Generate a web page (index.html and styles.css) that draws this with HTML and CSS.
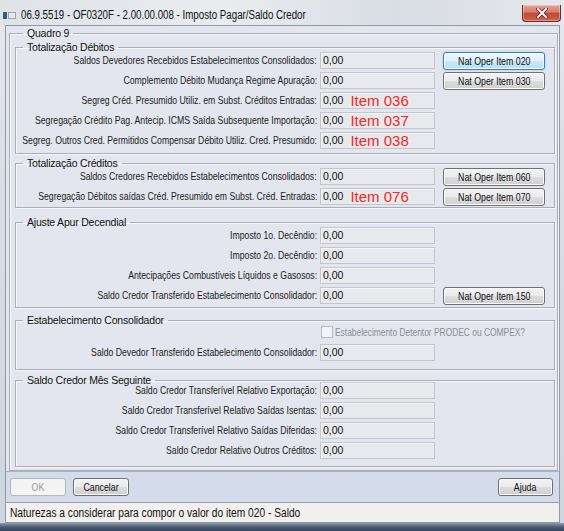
FILE: index.html
```html
<!DOCTYPE html>
<html lang="pt-BR">
<head>
    <meta charset="UTF-8">
    <title>Imposto Pagar/Saldo Credor</title>
    <link rel="stylesheet" href="styles.css">
</head>
<body>
    <div class="window">
        <div class="titlebar">
            <svg class="app-icon" width="13" height="7" viewBox="0 0 13 7">
                <rect x="0" y="0" width="4" height="7" fill="#2f5f7a"/>
                <rect x="5.5" y="0.5" width="7" height="6" fill="#e4e8ec" stroke="#9aa3ad"/>
            </svg>
            <span class="title"><span class="narrow">06.9.5519 - OF0320F - 2.00.00.008 - Imposto Pagar/Saldo Credor</span></span>
            <button class="close-btn">
                <svg width="12" height="10" viewBox="0 0 12 10">
                    <path d="M2 1 L10 9 M10 1 L2 9" stroke="#5a1a14" stroke-width="3.4" stroke-linecap="square"/>
                    <path d="M2 1 L10 9 M10 1 L2 9" stroke="#fff" stroke-width="2" stroke-linecap="square"/>
                </svg>
            </button>
        </div>

        <div class="client">
            <fieldset class="quadro">
                <legend>Quadro 9</legend>

                <fieldset class="group debitos">
                    <legend>Totalização Débitos</legend>
                    <div class="rows">
                        <div class="row">
                            <label><span class="narrow">Saldos Devedores Recebidos Estabelecimentos Consolidados:</span></label>
                            <div class="field">0,00</div>
                            <button class="btn btn-default"><span class="narrow">Nat Oper Item 020</span></button>
                        </div>
                        <div class="row">
                            <label><span class="narrow">Complemento Débito Mudança Regime Apuração:</span></label>
                            <div class="field">0,00</div>
                            <button class="btn"><span class="narrow">Nat Oper Item 030</span></button>
                        </div>
                        <div class="row">
                            <label><span class="narrow">Segreg Créd. Presumido Utiliz. em Subst. Créditos Entradas:</span></label>
                            <div class="field">0,00<span class="note">Item 036</span></div>
                        </div>
                        <div class="row">
                            <label><span class="narrow">Segregação Crédito Pag. Antecip. ICMS Saída Subsequente Importação:</span></label>
                            <div class="field">0,00<span class="note">Item 037</span></div>
                        </div>
                        <div class="row">
                            <label><span class="narrow">Segreg. Outros Cred. Permitidos Compensar Débito Utiliz. Cred. Presumido:</span></label>
                            <div class="field">0,00<span class="note">Item 038</span></div>
                        </div>
                    </div>
                </fieldset>

                <fieldset class="group creditos">
                    <legend>Totalização Créditos</legend>
                    <div class="rows">
                        <div class="row">
                            <label><span class="narrow">Saldos Credores Recebidos Estabelecimentos Consolidados:</span></label>
                            <div class="field">0,00</div>
                            <button class="btn"><span class="narrow">Nat Oper Item 060</span></button>
                        </div>
                        <div class="row">
                            <label><span class="narrow">Segregação Débitos saídas Créd. Presumido em Subst. Créd. Entradas:</span></label>
                            <div class="field">0,00<span class="note">Item 076</span></div>
                            <button class="btn"><span class="narrow">Nat Oper Item 070</span></button>
                        </div>
                    </div>
                </fieldset>

                <fieldset class="group ajuste">
                    <legend>Ajuste Apur Decendial</legend>
                    <div class="rows">
                        <div class="row">
                            <label><span class="narrow">Imposto 1o. Decêndio:</span></label>
                            <div class="field">0,00</div>
                        </div>
                        <div class="row">
                            <label><span class="narrow">Imposto 2o. Decêndio:</span></label>
                            <div class="field">0,00</div>
                        </div>
                        <div class="row">
                            <label><span class="narrow">Antecipações Combustíveis Líquidos e Gasosos:</span></label>
                            <div class="field">0,00</div>
                        </div>
                        <div class="row">
                            <label><span class="narrow">Saldo Credor Transferido Estabelecimento Consolidador:</span></label>
                            <div class="field">0,00</div>
                            <button class="btn"><span class="narrow">Nat Oper Item 150</span></button>
                        </div>
                    </div>
                </fieldset>

                <fieldset class="group estab">
                    <legend>Estabelecimento Consolidador</legend>
                    <div class="rows">
                        <div class="row row-check">
                            <span class="check-box"></span>
                            <span class="check-label"><span class="narrow">Estabelecimento Detentor PRODEC ou COMPEX?</span></span>
                        </div>
                        <div class="row">
                            <label><span class="narrow">Saldo Devedor Transferido Estabelecimento Consolidador:</span></label>
                            <div class="field">0,00</div>
                        </div>
                    </div>
                </fieldset>

                <fieldset class="group saldo">
                    <legend>Saldo Credor Mês Seguinte</legend>
                    <div class="rows">
                        <div class="row">
                            <label><span class="narrow">Saldo Credor Transferível Relativo Exportação:</span></label>
                            <div class="field">0,00</div>
                        </div>
                        <div class="row">
                            <label><span class="narrow">Saldo Credor Transferível Relativo Saídas Isentas:</span></label>
                            <div class="field">0,00</div>
                        </div>
                        <div class="row">
                            <label><span class="narrow">Saldo Credor Transferível Relativo Saídas Diferidas:</span></label>
                            <div class="field">0,00</div>
                        </div>
                        <div class="row">
                            <label><span class="narrow">Saldo Credor Relativo Outros Créditos:</span></label>
                            <div class="field">0,00</div>
                        </div>
                    </div>
                </fieldset>
            </fieldset>

            <div class="buttonbar">
                <button class="btn btn-ok" disabled><span class="narrow">OK</span></button>
                <button class="btn btn-cancel"><span class="narrow">Cancelar</span></button>
                <button class="btn btn-help"><span class="narrow">Ajuda</span></button>
            </div>

            <div class="statusbar"><span class="narrow">Naturezas a considerar para compor o valor do item 020 - Saldo</span></div>
        </div>
    </div>
</body>
</html>
```

FILE: styles.css
```css
* {
    box-sizing: border-box;
}

body {
    margin: 0;
    width: 564px;
    height: 531px;
    overflow: hidden;
    font-family: "Liberation Sans", Arial, sans-serif;
    font-size: 11px;
    color: #1b1b1b;
    background: #cfd6de;
}

/* texto estreito, como a fonte do sistema */
.narrow {
    display: inline-block;
    white-space: nowrap;
    transform: scaleX(.8);
    transform-origin: left center;
}

/* moldura da janela (estilo aero) */
.window {
    width: 564px;
    height: 531px;
    display: flex;
    flex-direction: column;
    padding: 0 4px 8px 5px;
    background:
        linear-gradient(to bottom, #8e9aab 0, #4d5d74 50%, #34445c 100%) bottom / 100% 8px no-repeat,
        linear-gradient(to bottom, #e6e9ed 0, #dadfe5 30%, #cdd5de 100%);
}

.titlebar {
    height: 25px;
    margin: 0 -4px 0 -5px;
    padding: 5px 3px 0 3px;
    display: flex;
    align-items: center;
    background: linear-gradient(to right, #dfe3e8 0, #e9ecef 40%, #d9dee4 70%, #e4e7eb 100%);
}

.app-icon {
    flex: none;
}

.title {
    margin-left: 5px;
    font-size: 12px;
    color: #101010;
    white-space: nowrap;
}

.title .narrow {
    transform: scaleX(.81);
}

.close-btn {
    margin-left: auto;
    align-self: flex-start;
    flex: none;
    width: 39px;
    height: 17px;
    padding: 0;
    border: 1px solid #6b2a22;
    border-top: none;
    border-radius: 0 0 4px 4px;
    background: linear-gradient(to bottom, #e6a294 0, #d57d6c 45%, #c24a36 50%, #cf5f48 100%);
    box-shadow: inset 0 0 0 1px rgba(255, 255, 255, 0.35);
    display: flex;
    align-items: center;
    justify-content: center;
}

.client {
    flex: 1;
    display: flex;
    flex-direction: column;
    background: #e3e6ee;
    border: 1px solid #8f9aa8;
}

fieldset {
    margin: 0;
    padding: 0;
    min-width: 0;
    border: 1px solid #a9aeb6;
    box-shadow: 1px 1px 0 #f6f7fa, inset 1px 1px 0 #f6f7fa;
}

legend {
    padding: 0 4px;
    font-size: 10.5px;
    letter-spacing: -0.2px;
    line-height: 12px;
    color: #111;
}

.quadro {
    margin: 1px 1px 0 3px;
    padding: 0 2px 3px 0;
}

.quadro > legend {
    margin-left: 13px;
}

.group {
    margin: 2px 0 0 5px;
    padding: 0 9px 3px 0;
}

.group > legend {
    margin-left: 7px;
}

.rows {
    margin-top: -3px;
}

.creditos {
    margin-top: 3px;
    padding-bottom: 1px;
}

.ajuste {
    margin-top: 8px;
    padding-bottom: 2px;
}

.estab {
    margin-top: 6px;
    padding-bottom: 7px;
}

.saldo {
    margin-top: 4px;
    padding-bottom: 5px;
}

.estab .rows {
    margin-top: -5px;
}

.saldo .rows {
    margin-top: -6px;
    margin-bottom: 1px;
}

.estab .row-check {
    height: 21px;
}

.row {
    display: grid;
    grid-template-columns: minmax(0, 1fr) 115px 110px;
    align-items: center;
    height: 20px;
}

.row label {
    display: flex;
    justify-content: flex-end;
    margin-right: 3px;
    font-size: 11px;
    white-space: nowrap;
}

.row label .narrow {
    transform: scaleX(.79);
    transform-origin: right center;
}

.field {
    height: 17px;
    display: flex;
    align-items: center;
    padding-left: 2px;
    font-size: 10.5px;
    background: #e8e9ed;
    border: 1px solid #c3c6cd;
    box-shadow: inset 1px 1px 0 #f3f4f6;
    color: #111;
    white-space: nowrap;
}

.note {
    margin-left: 7px;
    font-size: 15px;
    color: #f02a26;
}

.row-check {
    grid-template-columns: minmax(0, 1fr) 225px;
}

.check-box {
    grid-column: 2;
    grid-row: 1;
    width: 12px;
    height: 12px;
    margin-left: 1px;
    border: 1px solid #b9bdc3;
    background: #f2f3f5;
}

.check-label {
    grid-column: 2;
    grid-row: 1;
    margin-left: 15px;
    font-size: 10.5px;
    color: #8a8e95;
    white-space: nowrap;
}

.btn {
    height: 18px;
    padding: 0;
    display: flex;
    align-items: center;
    justify-content: center;
    font-family: inherit;
    font-size: 11px;
    color: #111;
    border: 1px solid #707070;
    border-radius: 3px;
    background: linear-gradient(to bottom, #f3f3f3 0, #ebebeb 48%, #dddddd 52%, #cfcfcf 100%);
    box-shadow: inset 0 0 0 1px #fbfbfb;
}

.btn .narrow {
    transform-origin: center center;
}

.row .btn {
    width: 102px;
    margin-left: 8px;
    align-self: end;
}

.btn-default {
    border-color: #3c7fb1;
    background: linear-gradient(to bottom, #eef8fe 0, #dff1fb 48%, #c9e8f9 52%, #b8dff5 100%);
    box-shadow: inset 0 0 0 1px #f4fbff, 0 0 2px #7fc4ee;
}

.buttonbar {
    height: 31px;
    display: flex;
    align-items: flex-start;
    padding: 6px 6px 0 4px;
    background: #d4dbeb;
    border-top: 1px solid #a9b3c5;
}

.btn-ok {
    width: 56px;
    color: #9a9a9a;
    border-color: #b2b7bc;
    background: #f4f4f4;
    box-shadow: none;
}

.btn-cancel {
    width: 56px;
    margin-left: 7px;
}

.btn-help {
    width: 55px;
    margin-left: auto;
}

.statusbar {
    height: 20px;
    padding-left: 4px;
    display: flex;
    align-items: center;
    font-size: 12px;
    color: #111;
    background: #f1f0ee;
    border-top: 1px solid #9a9ea6;
}

.statusbar .narrow {
    transform: scaleX(.85);
}
```
